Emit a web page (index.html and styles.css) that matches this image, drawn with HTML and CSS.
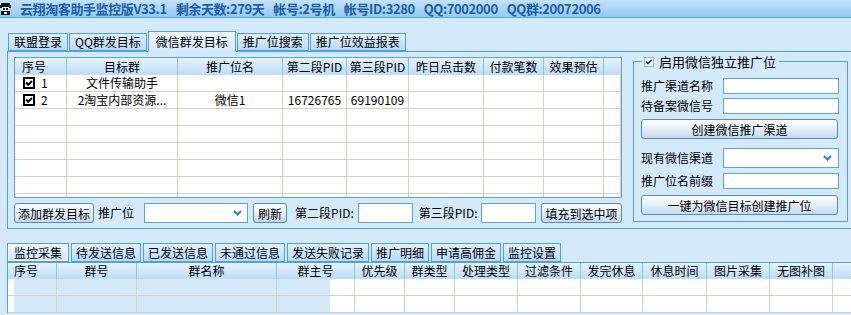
FILE: index.html
```html
<!DOCTYPE html>
<html>
<head>
    <meta charset="UTF-8">
    <title>云翔淘客助手监控版</title>
    <link rel="stylesheet" href="styles.css">
</head>
<body>
    <div class="titlebar">
        <svg class="logo" viewBox="0 0 11 14">
            <rect x="1" y="1" width="9" height="4" fill="#111"/>
            <rect x="0" y="3" width="2" height="3" fill="#111"/>
            <rect x="9" y="3" width="2" height="3" fill="#111"/>
            <rect x="2" y="5" width="7" height="4" fill="#fff"/>
            <rect x="3" y="6" width="2" height="2" fill="#111"/>
            <rect x="6" y="6" width="2" height="2" fill="#111"/>
            <rect x="1" y="9" width="9" height="4" fill="#111"/>
            <rect x="4" y="10" width="3" height="2" fill="#fff"/>
        </svg>
        <span>云翔淘客助手监控版V33.1</span>
        <span>剩余天数:279天</span>
        <span>帐号:2号机</span>
        <span>帐号ID:3280</span>
        <span>QQ:7002000</span>
        <span>QQ群:20072006</span>
    </div>

    <div class="tabs top-tabs">
        <div class="tab">联盟登录</div>
        <div class="tab">QQ群发目标</div>
        <div class="tab active">微信群发目标</div>
        <div class="tab">推广位搜索</div>
        <div class="tab">推广位效益报表</div>
    </div>

    <div class="panel">
        <div class="left">
            <div class="grid targets">
                <div class="hd first">序号</div>
                <div class="hd">目标群</div>
                <div class="hd">推广位名</div>
                <div class="hd">第二段PID</div>
                <div class="hd">第三段PID</div>
                <div class="hd">昨日点击数</div>
                <div class="hd">付款笔数</div>
                <div class="hd">效果预估</div>
                <div class="hd last"></div>

                <div class="cell first"><svg class="chk" viewBox="0 0 12 12"><rect x="1" y="1" width="10" height="10" fill="#fff" stroke="#000" stroke-width="2"/><path d="M3 5.5l2.2 2.3L9 4" fill="none" stroke="#000" stroke-width="2"/></svg>1</div>
                <div class="cell">文件传输助手</div>
                <div class="cell"></div><div class="cell"></div><div class="cell"></div>
                <div class="cell"></div><div class="cell"></div><div class="cell"></div><div class="cell"></div>

                <div class="cell first"><svg class="chk" viewBox="0 0 12 12"><rect x="1" y="1" width="10" height="10" fill="#fff" stroke="#000" stroke-width="2"/><path d="M3 5.5l2.2 2.3L9 4" fill="none" stroke="#000" stroke-width="2"/></svg>2</div>
                <div class="cell">2淘宝内部资源...</div>
                <div class="cell">微信1</div>
                <div class="cell">16726765</div>
                <div class="cell">69190109</div>
                <div class="cell"></div><div class="cell"></div><div class="cell"></div><div class="cell"></div>

                <div class="cell"></div><div class="cell"></div><div class="cell"></div><div class="cell"></div><div class="cell"></div><div class="cell"></div><div class="cell"></div><div class="cell"></div><div class="cell"></div>
                <div class="cell"></div><div class="cell"></div><div class="cell"></div><div class="cell"></div><div class="cell"></div><div class="cell"></div><div class="cell"></div><div class="cell"></div><div class="cell"></div>
                <div class="cell"></div><div class="cell"></div><div class="cell"></div><div class="cell"></div><div class="cell"></div><div class="cell"></div><div class="cell"></div><div class="cell"></div><div class="cell"></div>
                <div class="cell"></div><div class="cell"></div><div class="cell"></div><div class="cell"></div><div class="cell"></div><div class="cell"></div><div class="cell"></div><div class="cell"></div><div class="cell"></div>
                <div class="cell"></div><div class="cell"></div><div class="cell"></div><div class="cell"></div><div class="cell"></div><div class="cell"></div><div class="cell"></div><div class="cell"></div><div class="cell"></div>
                <div class="cell"></div><div class="cell"></div><div class="cell"></div><div class="cell"></div><div class="cell"></div><div class="cell"></div><div class="cell"></div><div class="cell"></div><div class="cell"></div>
            </div>

            <div class="toolbar">
                <button class="btn">添加群发目标</button>
                <span class="lbl l-pos">推广位</span>
                <div class="select sel-pos"><svg class="chev" viewBox="0 0 9 6"><path d="M1 1l3.5 3.5L8 1" fill="none" stroke="#2b7fd2" stroke-width="2"/></svg></div>
                <button class="btn btn-sm">刷新</button>
                <span class="lbl l-pid">第二段PID:</span>
                <input class="field pid" type="text">
                <span class="lbl l-pid3">第三段PID:</span>
                <input class="field pid" type="text">
                <button class="btn btn-fill">填充到选中项</button>
            </div>
        </div>

        <div class="group">
            <div class="legend">
                <svg class="chk-blue" viewBox="0 0 11 11"><rect x="0.5" y="0.5" width="10" height="10" fill="#fff" stroke="#7fb4e2"/><path d="M2.5 5l2 2.2L8.5 3" fill="none" stroke="#1e3d63" stroke-width="1.8"/></svg>
                启用微信独立推广位
            </div>
            <div class="row first-row">
                <span class="lbl">推广渠道名称</span>
                <input class="field wide" type="text">
            </div>
            <div class="row">
                <span class="lbl">待备案微信号</span>
                <input class="field wide" type="text">
            </div>
            <button class="btn full b1">创建微信推广渠道</button>
            <div class="row r-sel">
                <span class="lbl">现有微信渠道</span>
                <div class="select wide"><svg class="chev" viewBox="0 0 9 6"><path d="M1 1l3.5 3.5L8 1" fill="none" stroke="#2b7fd2" stroke-width="2"/></svg></div>
            </div>
            <div class="row r-pre">
                <span class="lbl">推广位名前缀</span>
                <input class="field wide" type="text">
            </div>
            <button class="btn full b2">一键为微信目标创建推广位</button>
        </div>
    </div>

    <div class="tabs bottom-tabs">
        <div class="tab active">监控采集</div>
        <div class="tab">待发送信息</div>
        <div class="tab">已发送信息</div>
        <div class="tab">未通过信息</div>
        <div class="tab">发送失败记录</div>
        <div class="tab">推广明细</div>
        <div class="tab">申请高佣金</div>
        <div class="tab">监控设置</div>
    </div>

    <div class="list">
        <div class="grid monitor">
            <div class="hd first">序号</div>
            <div class="hd">群号</div>
            <div class="hd">群名称</div>
            <div class="hd">群主号</div>
            <div class="hd">优先级</div>
            <div class="hd">群类型</div>
            <div class="hd">处理类型</div>
            <div class="hd">过滤条件</div>
            <div class="hd">发完休息</div>
            <div class="hd">休息时间</div>
            <div class="hd">图片采集</div>
            <div class="hd">无图补图</div>
            <div class="hd"></div>
        </div>
        <div class="grid monitor body-row">
            <div class="cell"></div><div class="cell"></div><div class="cell"></div><div class="cell"></div><div class="cell"></div><div class="cell"></div><div class="cell"></div><div class="cell"></div><div class="cell"></div><div class="cell"></div><div class="cell"></div><div class="cell"></div><div class="cell"></div>
        </div>
        <div class="grid monitor body-row">
            <div class="cell"></div><div class="cell"></div><div class="cell"></div><div class="cell"></div><div class="cell"></div><div class="cell"></div><div class="cell"></div><div class="cell"></div><div class="cell"></div><div class="cell"></div><div class="cell"></div><div class="cell"></div><div class="cell"></div>
        </div>
    </div>
</body>
</html>
```

FILE: styles.css
```css
* { box-sizing: border-box; }

body {
    margin: 0;
    width: 851px;
    height: 315px;
    overflow: hidden;
    background: #d4eafb;
    font-family: "Noto Sans CJK SC", "Liberation Sans", sans-serif;
    font-size: 12px;
    line-height: 16px;
    color: #000;
}

/* title */
.titlebar {
    height: 18px;
    display: flex;
    align-items: center;
    background: linear-gradient(#c2e2f9, #93caf1);
    border-bottom: 1px solid #5ca6df;
    color: #1b5ca6;
    font-weight: bold;
    font-size: 13px;
    letter-spacing: -0.4px;
    white-space: nowrap;
}
.logo { width: 11px; height: 14px; margin-right: 9px; }
.titlebar span { margin-right: 9px; }

/* tabs */
.tabs { display: flex; align-items: flex-end; white-space: nowrap; position: relative; z-index: 1; }
.tab {
    height: 18px;
    line-height: 16px;
    padding: 0 5px;
    border: 1px solid #4e9fdb;
    background: linear-gradient(#e0f0fd, #b8dbf6);
    margin-right: 1px;
}
.top-tabs { margin: 13px 0 0 8px; height: 20px; }
.top-tabs .tab.active {
    height: 21px;
    line-height: 19px;
    padding: 0 7px;
    margin-bottom: -1px;
    background: linear-gradient(#eef7fe, #d4eafb);
    border-bottom-color: #d4eafb;
}

.bottom-tabs { margin: 14px 0 0 7px; height: 19px; }
.bottom-tabs .tab { height: 19px; line-height: 17px; padding: 0 4px; margin-right: 2px; }
.bottom-tabs .tab.active { padding: 0 6px; background: linear-gradient(#eef7fe, #cfe7fa); box-shadow: inset 0 0 0 1px #fff; }

/* top panel */
.panel {
    margin-left: 7px;
    width: 900px;
    height: 178px;
    border: 1px solid #4ea3de;
    border-right: none;
    padding: 5px 0 0 6px;
    display: flex;
    align-items: flex-start;
}
.left { width: 608px; }

.grid { display: grid; }
.targets {
    height: 141px;
    overflow: hidden;
    border: 1px solid #5aa5dc;
    background: #fff;
    grid-template-columns: 52px 111px 105px 64px 62px 75px 60px 60px 1fr;
    grid-auto-rows: 17px;
}
.hd {
    height: 17px;
    line-height: 17px;
    text-align: center;
    white-space: nowrap;
    background: linear-gradient(#e6f3fd, #bcdcf5);
    border-right: 1px solid #8cc2ea;
}
.hd.first { text-align: left; padding-left: 7px; }
.hd.last { border-right: none; }
.cell {
    height: 17px;
    line-height: 16px;
    text-align: center;
    white-space: nowrap;
    border-right: 1px solid #d4d0c8;
    border-bottom: 1px solid #d4d0c8;
}
.cell.first { text-align: left; padding-left: 8px; display: flex; align-items: center; }
.chk { width: 12px; height: 12px; margin-right: 6px; }

/* toolbar */
.toolbar { display: flex; align-items: center; height: 20px; margin-top: 5px; }
.btn {
    height: 20px;
    padding: 0 3px;
    font: inherit;
    line-height: 17px;
    color: #000;
    border: 1px solid #4e8dc8;
    border-radius: 3px;
    background: linear-gradient(#fcfeff, #e8f1fa 45%, #c6daee);
}
.btn-sm { padding: 0 4px; margin-left: 5px; }
.btn-fill { margin-left: 5px; }
.lbl { white-space: nowrap; }
.l-pos { margin-left: 4px; }
.l-pid { margin-left: 8px; }
.l-pid3 { margin-left: 6px; }
.field {
    height: 20px;
    padding: 0;
    border: 1px solid #5aa5dc;
    background: #fff;
}
.pid { width: 55px; margin-left: 4px; }
.select {
    height: 20px;
    border: 1px solid #5aa5dc;
    background: #fff;
    display: flex;
    align-items: center;
    justify-content: flex-end;
    padding-right: 5px;
}
.sel-pos { width: 104px; margin-left: 10px; }
.chev { width: 9px; height: 6px; }

/* group box */
.group {
    width: 215px;
    margin: 4px 0 0 11px;
    border: 1px solid #4ea3de;
    padding: 0 8px 6px 7px;
}
.legend {
    display: flex;
    align-items: center;
    width: max-content;
    height: 13px;
    margin: -7px 0 0 1px;
    padding: 0 3px 0 2px;
    background: #d4eafb;
    line-height: 13px;
    font-size: 13px;
}
.chk-blue { width: 10px; height: 10px; margin-right: 5px; }
.row { display: flex; justify-content: space-between; align-items: center; margin-top: 4px; }
.first-row { margin-top: 10px; }
.field.wide { width: 116px; height: 16px; }
.select.wide { width: 116px; padding-right: 6px; }
.full { width: 197px; display: block; }
.b1 { margin-top: 5px; }
.r-sel { margin-top: 9px; }
.r-pre { margin-top: 5px; }
.b2 { margin-top: 6px; }

/* bottom list */
.list {
    margin-left: 7px;
    width: 900px;
    border-top: 1px solid #4ea3de;
    border-left: 1px solid #4ea3de;
}
.monitor { grid-template-columns: 49px 80px 140px 78px 50px 50px 63px 63px 62px 64px 63px 63px 1fr; }
.monitor .hd { height: 16px; line-height: 16px; }
.monitor .hd.first { padding-left: 6px; }
.body-row { background: linear-gradient(to right, #fff 6px, #d4eafb 6px 322px, #fff 322px); }
.body-row .cell { height: 17px; }
```
